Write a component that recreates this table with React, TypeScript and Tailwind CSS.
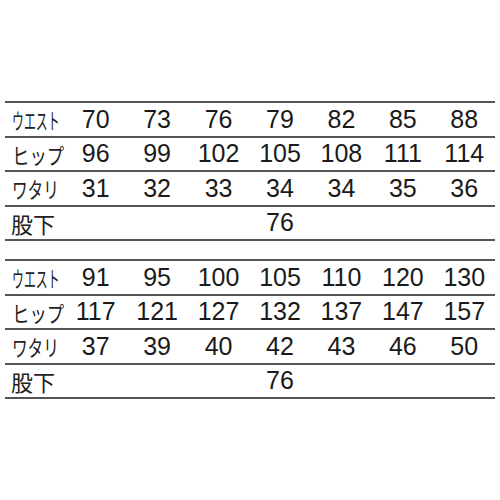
const tables = [
  {
    waist: ['70', '73', '76', '79', '82', '85', '88'],
    hip: ['96', '99', '102', '105', '108', '111', '114'],
    thigh: ['31', '32', '33', '34', '34', '35', '36'],
  },
  {
    waist: ['91', '95', '100', '105', '110', '120', '130'],
    hip: ['117', '121', '127', '132', '137', '147', '157'],
    thigh: ['37', '39', '40', '42', '43', '46', '50'],
  },
]

const jp = { fontFamily: '"Noto Sans CJK JP", sans-serif' }
const num = { fontFamily: '"Liberation Sans", Arial, sans-serif' }

function Label({ text, scale }: { text: string; scale: string }) {
  return (
    <div className="pl-[7px] flex items-center overflow-visible whitespace-nowrap">
      <span className={`inline-block origin-left text-[22px] leading-none text-[#222] ${scale}`} style={jp}>
        {text}
      </span>
    </div>
  )
}

function Row({ label, values }: { label: React.ReactNode; values: string[] }) {
  return (
    <div className="grid grid-cols-[60px_repeat(7,1fr)] h-[34.5px] border-b-2 border-[#555]">
      {label}
      {values.map((v, i) => (
        <div key={i} className="flex items-center justify-center text-[25px] leading-none text-[#1a1a1a]" style={num}>
          {v}
        </div>
      ))}
    </div>
  )
}

function SizeTable({ waist, hip, thigh }: { waist: string[]; hip: string[]; thigh: string[] }) {
  return (
    <div className="border-t-2 border-[#555]">
      <Row label={<Label text="ウエスト" scale="scale-x-[0.54]" />} values={waist} />
      <Row label={<Label text="ヒップ" scale="scale-x-[0.79]" />} values={hip} />
      <Row label={<Label text="ワタリ" scale="scale-x-[0.71]" />} values={thigh} />
      <Row
        label={
          <div className="pl-[6px] flex items-center whitespace-nowrap">
            <span className="text-[22px] leading-none text-[#222]" style={jp}>股下</span>
          </div>
        }
        values={['', '', '', '76', '', '', '']}
      />
    </div>
  )
}

export default function App() {
  return (
    <div className="w-[500px] h-[500px] bg-white px-[5px] pt-[101px]">
      <div className="flex flex-col gap-[18px]">
        {tables.map((t, i) => (
          <SizeTable key={i} {...t} />
        ))}
      </div>
    </div>
  )
}
